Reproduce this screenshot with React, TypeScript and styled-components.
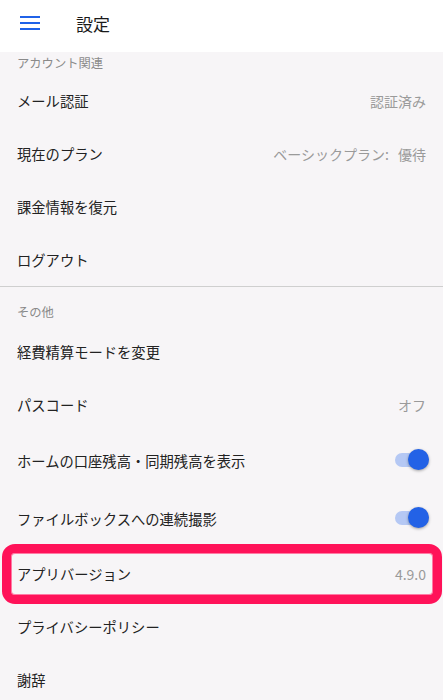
import React from "react";
import styled, { createGlobalStyle } from "styled-components";

const GlobalStyle = createGlobalStyle`
  html, body {
    margin: 0;
    padding: 0;
    background: #f7f5f7;
  }
  body {
    font-family: Roboto, "Noto Sans CJK JP", sans-serif;
    color: #212121;
  }
`;

type Item = {
  label: string;
  value?: string;
  toggle?: boolean;
  highlight?: boolean;
};

const account: Item[] = [
  { label: "メール認証", value: "認証済み" },
  { label: "現在のプラン", value: "ベーシックプラン: 優待" },
  { label: "課金情報を復元" },
  { label: "ログアウト" },
];

const others: Item[] = [
  { label: "経費精算モードを変更" },
  { label: "パスコード", value: "オフ" },
  { label: "ホームの口座残高・同期残高を表示", toggle: true },
  { label: "ファイルボックスへの連続撮影", toggle: true },
  { label: "アプリバージョン", value: "4.9.0", highlight: true },
  { label: "プライバシーポリシー" },
  { label: "謝辞" },
];

const MenuIcon = () => (
  <svg width="20" height="14" viewBox="0 0 20 14">
    <rect x="0" y="0" width="20" height="2" fill="#2062e8" />
    <rect x="0" y="6" width="20" height="2" fill="#2062e8" />
    <rect x="0" y="12" width="20" height="2" fill="#2062e8" />
  </svg>
);

const SettingRow = ({ item }: { item: Item }) => (
  <Row $tall={item.toggle} $highlight={item.highlight}>
    <Label>{item.label}</Label>
    {item.value && <Value>{item.value}</Value>}
    {item.toggle && (
      <Switch>
        <Knob />
      </Switch>
    )}
  </Row>
);

const App = () => {
  return (
    <>
      <GlobalStyle />
      <Root>
        <Header>
          <MenuButton>
            <MenuIcon />
          </MenuButton>
          <Title>設定</Title>
        </Header>

        <SectionLabel $first>アカウント関連</SectionLabel>
        {account.map((item) => (
          <SettingRow key={item.label} item={item} />
        ))}

        <Divider />

        <SectionLabel>その他</SectionLabel>
        {others.map((item) => (
          <SettingRow key={item.label} item={item} />
        ))}
      </Root>
    </>
  );
};

const Root = styled.div`
  width: 443px;
  height: 700px;
  overflow: hidden;
  background: #f7f5f7;
`;

const Header = styled.header`
  display: flex;
  align-items: center;
  height: 52px;
  background: #ffffff;
`;

const MenuButton = styled.div`
  display: flex;
  align-items: center;
  padding: 0 0 0 20px;
  width: 56px;
  margin-top: -6px;
`;

const Title = styled.h1`
  margin: -6px 0 0;
  font-size: 17px;
  font-weight: 400;
  color: #1a1a1a;
`;

const SectionLabel = styled.div<{ $first?: boolean }>`
  display: flex;
  align-items: center;
  height: ${({ $first }) => ($first ? "22px" : "38px")};
  padding: ${({ $first }) => ($first ? "0 17px" : "12px 17px 0")};
  box-sizing: border-box;
  font-size: 12.3px;
  color: #8a8a8a;
`;

const Row = styled.div<{ $tall?: boolean; $highlight?: boolean }>`
  position: relative;
  display: flex;
  align-items: center;
  justify-content: space-between;
  height: ${({ $tall }) => ($tall ? "58px" : "53px")};
  padding: 0 17px;
  box-sizing: border-box;

  &::after {
    content: "";
    display: ${({ $highlight }) => ($highlight ? "block" : "none")};
    position: absolute;
    left: 2px;
    right: 1px;
    top: -3px;
    bottom: -4px;
    border: 9px solid #ff1259;
    border-radius: 13px;
    box-shadow: inset 0 0 0 1px #ff7aa4;
    pointer-events: none;
  }
`;

const Label = styled.span`
  font-size: 14.3px;
  color: #222222;
`;

const Value = styled.span`
  font-family: "Noto Sans CJK JP", sans-serif;
  font-size: 14px;
  color: #9a9a9a;
  white-space: pre;
  word-spacing: 6px;
`;

const Switch = styled.div`
  position: relative;
  width: 34px;
  height: 14px;
  margin-right: -3px;
  border-radius: 7px;
  background: #b5c8f4;
`;

const Knob = styled.div`
  position: absolute;
  right: 0;
  top: -4px;
  width: 21px;
  height: 21px;
  border-radius: 50%;
  background: #2362e6;
  box-shadow: 0 1px 3px rgba(0, 0, 0, 0.35);
`;

const Divider = styled.hr`
  margin: 0;
  border: none;
  height: 1px;
  background: #cfcfcf;
`;

export default App;
